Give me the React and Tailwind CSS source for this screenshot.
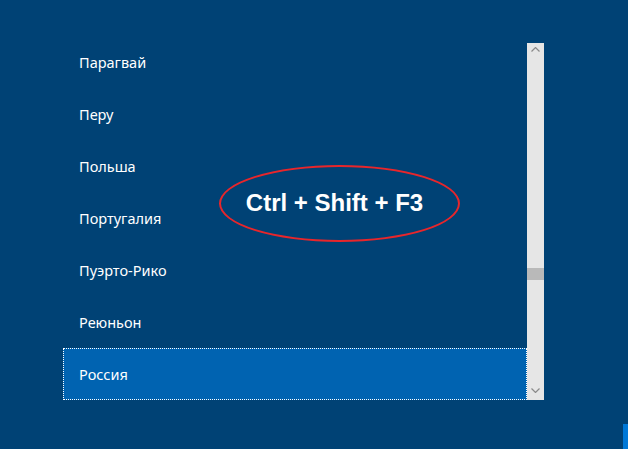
import React from 'react';

// Список стран (фрагмент прокрученного списка)
const COUNTRIES = ['Парагвай', 'Перу', 'Польша', 'Португалия', 'Пуэрто-Рико', 'Реюньон', 'Россия'];
const SELECTED = 'Россия';

function ScrollBar() {
  return (
    <div className="w-[17px] h-full bg-[#e6e6e6] flex flex-col items-center relative">
      <svg width="9" height="5" viewBox="0 0 9 5" className="mt-[4px]">
        <path d="M0.5 4.5 L4.5 0.5 L8.5 4.5" fill="none" stroke="#8a8a8a" strokeWidth="1.2" />
      </svg>
      <div className="absolute left-0 top-[225px] w-full h-[12px] bg-[#b9b9b9]" />
      <svg width="9" height="5" viewBox="0 0 9 5" className="mt-auto mb-[7px]">
        <path d="M0.5 0.5 L4.5 4.5 L8.5 0.5" fill="none" stroke="#8a8a8a" strokeWidth="1.2" />
      </svg>
    </div>
  );
}

export default function App() {
  return (
    <div className="w-[628px] h-[449px] bg-[#004275] relative overflow-hidden" style={{ fontFamily: '"Noto Sans", "Open Sans", sans-serif' }}>
      {/* список + полоса прокрутки */}
      <div className="pt-[43px] pl-[63px] flex h-[400px]">
        <div className="w-[464px] h-[357px] overflow-hidden">
          <div className="-mt-[7px]">
            {COUNTRIES.map((c) => (
              <div
                key={c}
                className={
                  c === SELECTED
                    ? 'h-[52px] flex items-center pl-[15px] pt-[2px] text-[14.5px] text-white bg-[#0063b1] border border-dotted border-white'
                    : 'h-[52px] flex items-center pl-[16px] pt-[2px] text-[14.5px] text-white'
                }
              >
                {c}
              </div>
            ))}
          </div>
        </div>
        <div className="h-[357px]">
          <ScrollBar />
        </div>
      </div>

      {/* подсказка */}
      <div className="absolute left-[219px] top-[165px] w-[241px] h-[77px] rounded-[50%] border-2 border-[#e8262b] flex items-center justify-center">
        <span className="text-white font-bold text-[24px] mr-[10px] -mt-[2px]" style={{ fontFamily: '"Liberation Sans", Arial, sans-serif' }}>
          Ctrl + Shift + F3
        </span>
      </div>

      <div className="absolute right-0 bottom-0 w-[5px] h-[25px] bg-[#0078d7]" />
    </div>
  );
}
